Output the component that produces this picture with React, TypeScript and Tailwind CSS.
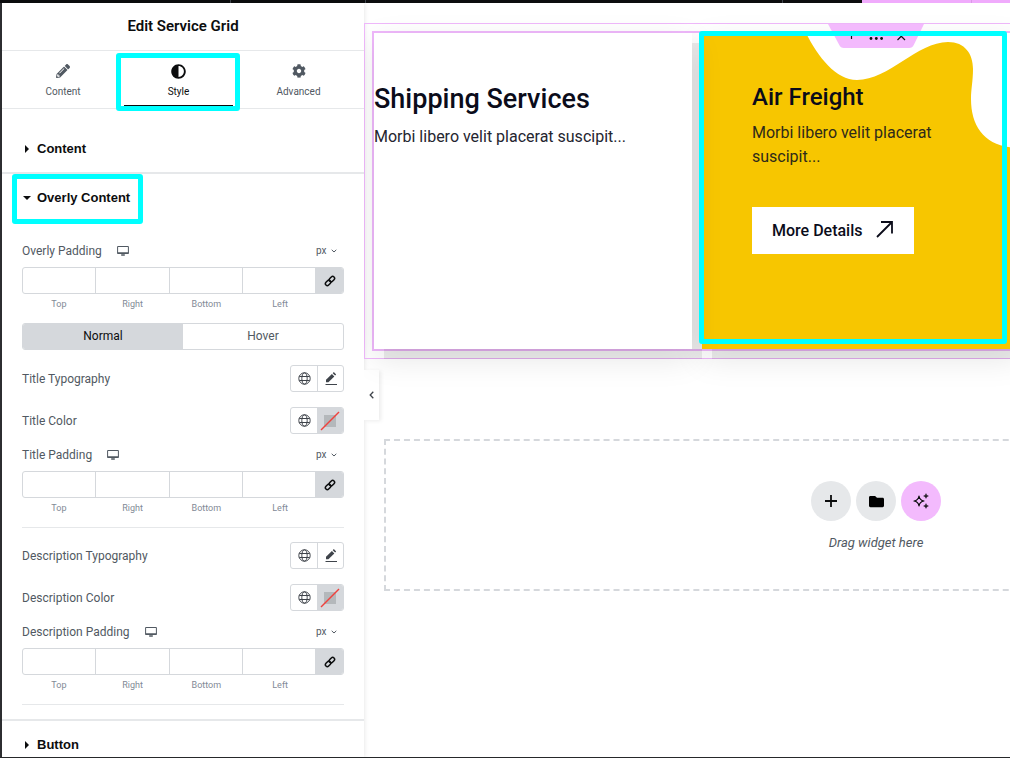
import { useId, useState, type ReactNode } from "react";
import { FaAdjust, FaCog, FaFolder, FaPencilAlt } from "react-icons/fa";

const SIDES = ["Top", "Right", "Bottom", "Left"];

function MonitorIcon() {
  return (
    <svg width="12" height="10" viewBox="0 0 12 10" fill="none" aria-hidden="true">
      <path d="M.6.5h10.8v7H.6z" stroke="#515962" strokeWidth="1" />
      <path d="M.6 7h10.8M4.2 9h3.6" stroke="#515962" strokeWidth="1.4" />
    </svg>
  );
}

function ChevronDown() {
  return (
    <svg width="6" height="4" viewBox="0 0 6 4" fill="none" aria-hidden="true" className="pointer-events-none">
      <path d="M.7.8 3 3 5.3.8" stroke="#515962" strokeWidth="1" />
    </svg>
  );
}

function GlobeIcon() {
  return (
    <svg width="13" height="13" viewBox="0 0 13 13" fill="none" stroke="#3f444b" strokeWidth="1" aria-hidden="true">
      <circle cx="6.500" cy="6.500" r="5.700" />
      <ellipse cx="6.500" cy="6.500" rx="2.700" ry="5.700" />
      <path d="M1.300 4.500h10.400M1.300 8.500h10.400" />
    </svg>
  );
}

function EditIcon() {
  return (
    <svg width="12" height="13" viewBox="0 0 12 13" aria-hidden="true">
      <path d="M1 10.300V7.800L6.900 2l2.400 2.400L3.400 10.300z" fill="#3f444b" />
      <path d="M7.700 1.200 8.800.1l2.400 2.400-1.100 1.100z" fill="#3f444b" />
      <path d="M.5 12.500h11.500" stroke="#3f444b" strokeWidth="1" />
    </svg>
  );
}

function LinkIcon() {
  return (
    <svg width="12" height="12" viewBox="0 0 12 12" fill="none" stroke="#0c0d0e" strokeWidth="1.500" aria-hidden="true">
      <rect x="-3" y="-1.900" width="6" height="3.800" rx="1.900" transform="translate(7.900 4.100) rotate(-45)" />
      <rect x="-3" y="-1.900" width="6" height="3.800" rx="1.900" transform="translate(4.100 7.900) rotate(-45)" />
    </svg>
  );
}

function SparkleIcon() {
  return (
    <svg width="16" height="16" viewBox="0 0 16 16" aria-hidden="true">
      <path
        d="M6 3c.5 3.200 1.800 4.500 5 5-3.200.5-4.500 1.800-5 5-.5-3.200-1.800-4.500-5-5 3.200-.5 4.500-1.800 5-5z"
        fill="none"
        stroke="#0c0d0e"
        strokeWidth="1.200"
        strokeLinejoin="round"
      />
      <path
        d="M13 .7c.3 1.600.7 2 2.300 2.300-1.600.3-2 .7-2.300 2.300-.3-1.600-.7-2-2.300-2.300 1.600-.3 2-.7 2.300-2.300zM13 10.700c.3 1.600.7 2 2.300 2.300-1.600.3-2 .7-2.300 2.300-.3-1.600-.7-2-2.300-2.300 1.600-.3 2-.7 2.300-2.300z"
        fill="#0c0d0e"
        stroke="#0c0d0e"
        strokeWidth=".6"
      />
    </svg>
  );
}

function Tab({ label, icon, active = false }: { label: string; icon: ReactNode; active?: boolean }) {
  return (
    <button
      type="button"
      role="tab"
      aria-selected={active}
      className={`relative flex flex-col items-center pt-3 text-[10px] leading-3 ${active ? "text-[#0c0d0e]" : "text-[#515962]"}`}
    >
      <span className="mb-[7px] flex h-4 items-center">{icon}</span>
      {label}
      {active && (
        <>
          <span className="absolute inset-x-0 bottom-0.5 h-px bg-[#0c0d0e]" />
          <span className="absolute top-0.5 -right-[7px] -left-2 h-[58px] rounded-[3px] border-5 border-[#00ffff]" />
        </>
      )}
    </button>
  );
}

function SectionHeading({ label, open = false, marked = false }: { label: string; open?: boolean; marked?: boolean }) {
  return (
    <button
      type="button"
      aria-expanded={open}
      className="relative flex h-[47px] w-full shrink-0 items-center pl-5 text-left font-['Liberation_Sans',Arial,sans-serif] text-[13px] leading-5 font-bold text-[#0c0d0e]"
    >
      <span className="flex w-[15px] shrink-0 items-center">
        <svg width="9" height="8" viewBox="0 0 9 8" aria-hidden="true">
          <path d={open ? "M1 2h8L5 6z" : "M3 0v8l4-4z"} fill="#0c0d0e" />
        </svg>
      </span>
      {label}
      {marked && <span className="absolute top-0 left-2.5 h-[50px] w-[131px] rounded-[3px] border-5 border-[#00ffff]" />}
    </button>
  );
}

function DimensionControl({ label }: { label: string }) {
  const id = useId();
  return (
    <fieldset>
      <div className="flex h-5 items-center">
        <span id={`${id}-name`}>{label}</span>
        <button type="button" aria-label="Desktop" className="ml-[15px]">
          <MonitorIcon />
        </button>
        <span className="mr-[7px] ml-auto flex items-center gap-1 text-[10px]">
          <select aria-label={`${label} unit`} className="w-[11px] appearance-none bg-transparent">
            <option>px</option>
          </select>
          <ChevronDown />
        </span>
      </div>
      <div className="mt-1.5 flex h-[27px] overflow-hidden rounded-[3px] border border-[#d5d8dc]">
        {SIDES.map((side) => (
          <input
            key={side}
            id={`${id}-${side}`}
            aria-describedby={`${id}-name`}
            type="text"
            className="w-0 flex-1 border-r border-[#d5d8dc] px-2 text-center outline-none"
          />
        ))}
        <button
          type="button"
          aria-label="Link values together"
          className="flex w-[27px] items-center justify-center bg-[#d5d8dc]"
        >
          <LinkIcon />
        </button>
      </div>
      <div className="mt-[3px] flex pr-[27px] text-[9px] leading-[14px] text-[#818a96]">
        {SIDES.map((side) => (
          <label key={side} htmlFor={`${id}-${side}`} className="flex-1 text-center">
            {side}
          </label>
        ))}
      </div>
    </fieldset>
  );
}

function PairControl({ label, kind }: { label: string; kind: "typography" | "color" }) {
  return (
    <div className="flex h-[27px] items-center justify-between">
      <span>{label}</span>
      <span className="flex h-full overflow-hidden rounded-[3px] border border-[#d5d8dc]">
        <button type="button" aria-label={`${label} global`} className="flex w-[26px] items-center justify-center pb-px">
          <GlobeIcon />
        </button>
        {kind === "typography" ? (
          <button
            type="button"
            aria-label={`Edit ${label}`}
            className="flex w-[26px] items-center justify-center border-l border-[#d5d8dc]"
          >
            <EditIcon />
          </button>
        ) : (
          <button type="button" aria-label={`Pick ${label}`} className="flex w-[26px] items-center justify-center bg-[#d5d8dc]">
            <svg width="20" height="20" viewBox="0 0 20 20" aria-hidden="true">
              <path d="M4 4h12v12H4z" fill="#b4b8bb" />
              <path d="M1 19 19 1" stroke="#f0413d" strokeWidth="1.400" />
            </svg>
          </button>
        )}
      </span>
    </div>
  );
}

function Sidebar() {
  const [state, setState] = useState("Normal");
  return (
    <aside className="flex w-[362px] shrink-0 flex-col overflow-visible bg-white shadow-[0_0_5px_rgba(0,0,0,0.12)]">
      <h1 className="flex h-12 shrink-0 items-center justify-center border-b border-[#e6e8ea] pb-0.5 text-[15px] leading-5 font-semibold text-[#0c0d0e]">
        Edit Service Grid
      </h1>
      <div role="tablist" className="grid h-[58px] shrink-0 grid-cols-[112fr_109fr_121fr] gap-[5px] border-b border-[#e6e8ea] px-[5px]">
        <Tab label="Content" icon={<FaPencilAlt size={14} />} />
        <Tab label="Style" icon={<FaAdjust size={15} />} active />
        <Tab label="Advanced" icon={<FaCog size={14} />} />
      </div>
      <div className="flex min-h-0 flex-1 flex-col overflow-hidden pt-4">
        <SectionHeading label="Content" />
        <div className="border-y-2 border-[#e6e8ea]">
          <SectionHeading label="Overly Content" open marked />
          <div className="px-5 pt-5 pb-3.5 text-xs leading-5 text-[#515962]">
            <DimensionControl label="Overly Padding" />
            <div className="mt-3 flex h-[27px] overflow-hidden rounded-[3px] border border-[#d5d8dc]">
              {["Normal", "Hover"].map((name) => (
                <button
                  key={name}
                  type="button"
                  aria-pressed={state === name}
                  onClick={() => setState(name)}
                  className={`flex-1 pb-0.5 ${state === name ? "bg-[#d5d8dc] text-[#0c0d0e]" : ""}`}
                >
                  {name}
                </button>
              ))}
            </div>
            <div className="mt-[15px] grid gap-[15px] pb-[11px]">
              <PairControl label="Title Typography" kind="typography" />
              <PairControl label="Title Color" kind="color" />
            </div>
            <DimensionControl label="Title Padding" />
            <hr className="mt-3 border-[#e6e8ea]" />
            <div className="mt-3.5 grid gap-[15px] pb-[11px]">
              <PairControl label="Description Typography" kind="typography" />
              <PairControl label="Description Color" kind="color" />
            </div>
            <DimensionControl label="Description Padding" />
            <hr className="mt-3 border-[#e6e8ea]" />
          </div>
        </div>
        <SectionHeading label="Button" />
      </div>
    </aside>
  );
}

function ServiceSection() {
  return (
    <section className="relative border border-[#efb8fb] p-[7px]">
      <div className="border-2 border-[#efb8fb]">
        <div className="grid h-[316px] grid-cols-[318px_318px] gap-2.5">
          <article className="relative z-10 bg-white pt-12 text-[#0b0c1a] shadow-[10px_10px_0_rgba(0,0,0,0.07),0_10px_30px_rgba(0,0,0,0.1)]">
            <h2 className="text-[27px] leading-9 font-medium">Shipping Services</h2>
            <p className="mt-2 text-base leading-6 text-[#24252f]">Morbi libero velit placerat suscipit...</p>
          </article>
          <article className="relative bg-[#f7c600] px-[50px] pt-12 shadow-[10px_10px_0_rgba(0,0,0,0.07),0_10px_30px_rgba(0,0,0,0.1)]">
            <svg width="318" height="116" viewBox="0 0 318 116" className="absolute top-0 left-0" aria-hidden="true">
              <path
                d="M104 0C116 24 134 47 155 47C187 47 215 9 246 9C263 9 271 21 271 36C271 48 269 56 269 66C269 95 284 115 318 115V0Z"
                fill="#fff"
              />
            </svg>
            <h2 className="relative text-2xl leading-8 font-medium text-[#0b0c1a]">Air Freight</h2>
            <p className="relative mt-2 text-base leading-6 text-[#2e2a1a]">Morbi libero velit placerat suscipit...</p>
            <a
              href="#details"
              className="mt-[38px] inline-flex h-[47px] items-center gap-3.5 bg-white px-5 text-base font-medium text-[#0b0c1a]"
            >
              More Details
              <svg width="18" height="18" viewBox="0 0 18 18" fill="none" className="mb-1" aria-hidden="true">
                <path d="M1 17 15.500 2.500M5 2h11V13.500" stroke="#0b0c1a" strokeWidth="1.800" />
              </svg>
            </a>
          </article>
        </div>
      </div>
      <div className="absolute inset-x-0 top-0 z-20 flex justify-center">
        <button type="button" aria-label="Section tools">
          <svg width="96" height="24" viewBox="0 0 96 24" aria-hidden="true">
            <path d="M0 0h96L86 20.500Q84.500 24 81 24H16Q12.500 24 11 20.500Z" fill="#f3bafd" />
            <path d="M23.500 7v8M19.500 11.500h8" stroke="#0c0d0e" strokeWidth="1.200" />
            <circle cx="43" cy="14.500" r="1.400" fill="#0c0d0e" />
            <circle cx="48.300" cy="14.500" r="1.400" fill="#0c0d0e" />
            <circle cx="53.600" cy="14.500" r="1.400" fill="#0c0d0e" />
            <path d="m69.500 8.500 7.500 7.500M77 8.500l-7.500 7.500" stroke="#0c0d0e" strokeWidth="1.200" />
          </svg>
        </button>
      </div>
      <span className="pointer-events-none absolute top-[7px] left-[334px] z-30 h-[313px] w-[308px] rounded-[3px] border-5 border-[#00ffff]" />
    </section>
  );
}

function Canvas() {
  return (
    <main className="relative min-w-0 flex-1 overflow-hidden">
      <div className="min-w-[1024px] pt-5">
        <ServiceSection />
        <div className="mx-5 mt-20 flex h-[152px] flex-col items-center border-2 border-dashed border-[#d5d8dc] pt-10">
          <div className="flex gap-[5px]">
            <button type="button" aria-label="Add new container" className="flex size-10 items-center justify-center rounded-full bg-[#e6e8ea]">
              <svg width="12" height="12" viewBox="0 0 12 12" aria-hidden="true">
                <path d="M6 0v12M0 6h12" stroke="#0c0d0e" strokeWidth="1.800" />
              </svg>
            </button>
            <button type="button" aria-label="Add template" className="flex size-10 items-center justify-center rounded-full bg-[#e6e8ea] text-black">
              <FaFolder size={15} />
            </button>
            <button type="button" aria-label="Build with AI" className="flex size-10 items-center justify-center rounded-full bg-[#f3bafd]">
              <SparkleIcon />
            </button>
          </div>
          <p className="mt-3 text-[13px] leading-5 text-[#515962] italic">Drag widget here</p>
        </div>
      </div>
      <button
        type="button"
        aria-label="Hide panel"
        className="absolute top-[367px] left-0 flex h-[50px] w-[15px] items-center justify-center bg-white shadow-[2px_1px_4px_rgba(0,0,0,0.08)]"
      >
        <svg width="5" height="8" viewBox="0 0 5 8" fill="none" aria-hidden="true">
          <path d="M4.300.8 1.200 4l3.100 3.200" stroke="#3f444b" strokeWidth="1.300" />
        </svg>
      </button>
    </main>
  );
}

export default function App() {
  return (
    <div className="flex h-screen flex-col overflow-hidden border-b border-[#26282a] bg-white font-['Roboto','Liberation_Sans',sans-serif]">
      <div className="flex h-[3px] shrink-0 bg-[#0c0d0e]">
        <span className="w-[231px] border-r border-[#3f444b]" />
        <span className="w-[135px] border-r border-[#3f444b]" />
        <span className="flex-1 border-r border-[#3f444b]" />
        <span className="w-[79px]" />
        <span className="w-[110px] border-r border-[#d99be6] bg-[#f0abfc]" />
        <span className="w-[38px] bg-[#f0abfc]" />
      </div>
      <div className="flex min-h-0 flex-1 border-l-2 border-[#2f3033]">
        <Sidebar />
        <Canvas />
      </div>
    </div>
  );
}
